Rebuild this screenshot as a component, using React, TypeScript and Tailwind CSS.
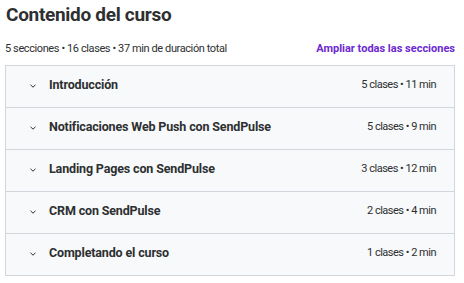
import React from "react";

const sections = [
  { title: "Introducción", meta: "5 clases • 11 min" },
  { title: "Notificaciones Web Push con SendPulse", meta: "5 clases • 9 min" },
  { title: "Landing Pages con SendPulse", meta: "3 clases • 12 min" },
  { title: "CRM con SendPulse", meta: "2 clases • 4 min" },
  { title: "Completando el curso", meta: "1 clases • 2 min" },
];

function Chevron() {
  return (
    <svg width="10" height="10" viewBox="0 0 10 10" fill="none" className="shrink-0">
      <path d="M2.5 3.8 L5 6.2 L7.5 3.8" stroke="#2d2f31" strokeWidth="1" />
    </svg>
  );
}

export default function App() {
  return (
    <div className="w-[464px] h-[283px] bg-white text-[#2d2f31]" style={{ fontFamily: "Roboto, 'Liberation Sans', sans-serif" }}>
      <div className="pl-[6px] pt-[3px] h-[40px]">
        <h2 className="text-[19px] font-bold leading-[24px] tracking-[-0.3px]">Contenido del curso</h2>
      </div>
      <div className="flex items-center justify-between pl-[5px] pr-[9px] h-[18px]">
        <span className="text-[11px] leading-[14px] tracking-[-0.4px]">5 secciones • 16 clases • 37 min de duración total</span>
        <span className="text-[11px] font-bold text-[#6d28d2] leading-[14px]">Ampliar todas las secciones</span>
      </div>
      <div className="ml-[5px] mt-[7px] w-[450px] border border-[#d1d7dc]">
        {sections.map((s, i) => (
          <div
            key={i}
            className={"flex items-center justify-between h-[41px] bg-[#f7f9fa] pl-[22px] pr-[18px]" + (i > 0 ? " border-t border-[#d1d7dc] h-[42px]" : "")}
          >
            <div className="flex items-center gap-[11px] pb-[2px]">
              <Chevron />
              <span className="text-[12.5px] font-bold tracking-[-0.15px]">{s.title}</span>
            </div>
            <span className="text-[11px] pb-[2px] tracking-[-0.5px]">{s.meta}</span>
          </div>
        ))}
      </div>
    </div>
  );
}
